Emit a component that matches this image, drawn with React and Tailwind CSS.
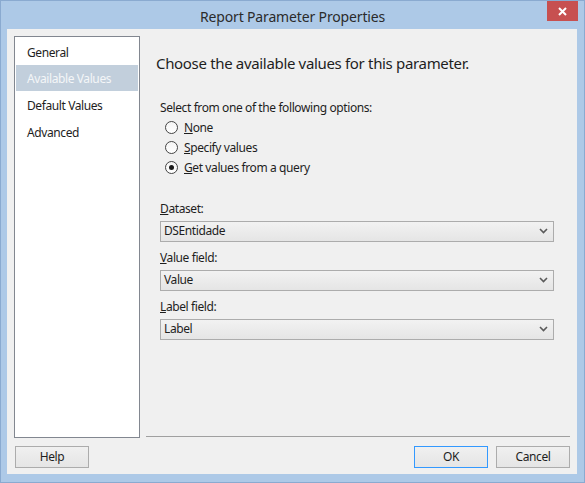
import React from 'react'

const font = { fontFamily: '"Noto Sans", "Open Sans", sans-serif' }

const Radio = ({ checked, children }) => (
  <div className="flex items-center h-[20px]">
    <span className="w-[13px] h-[13px] rounded-full border border-[#444] bg-gradient-to-b from-[#f4f4f4] to-[#ffffff] flex items-center justify-center">
      {checked ? <span className="w-[5px] h-[5px] rounded-full bg-[#1a1a1a]" /> : null}
    </span>
    <span className="ml-[6px] text-[12px] tracking-[-0.4px] text-[#1e1e1e]">{children}</span>
  </div>
)

const Select = ({ value }) => (
  <div className="w-[394px] h-[21px] border border-[#acacac] bg-gradient-to-b from-[#f2f2f2] to-[#e5e5e5] flex items-center justify-between pl-[3px] pr-[5px]">
    <span className="text-[12px] tracking-[-0.4px] text-[#1e1e1e]">{value}</span>
    <svg width="9" height="6" viewBox="0 0 9 6">
      <path d="M1 1 L4.5 4.5 L8 1" fill="none" stroke="#5a5a5a" strokeWidth="1.6" />
    </svg>
  </div>
)

const Btn = ({ children, primary }) => (
  <button className={`w-[74px] h-[22px] text-[12px] tracking-[-0.4px] text-[#1e1e1e] bg-gradient-to-b from-[#f0f0f0] to-[#e5e5e5] border ${primary ? 'border-[#3399ff]' : 'border-[#acacac]'}`}>
    {children}
  </button>
)

// page list on the left, heights tuned to the reference
const items = [
  { label: 'General', cls: 'h-[26px] pt-[2px]' },
  { label: 'Available Values', cls: 'h-[26px] pt-[1px] bg-[#c2cfdc] text-[#f4f6f8]' },
  { label: 'Default Values', cls: 'h-[27px] pt-[3px]' },
  { label: 'Advanced', cls: 'h-[27px] pt-[3px]' },
]

export default function App() {
  return (
    <div style={font} className="w-[585px] h-[483px] bg-[#adc9e7] border border-[#8aaad0] flex flex-col">
      <div className="h-[28px] relative flex items-center justify-center">
        <span className="text-[14px] tracking-[-0.15px] text-[#2b2b2b] mt-[2px]">Report Parameter Properties</span>
        <div className="absolute right-[6px] top-0 w-[31px] h-[20px] bg-[#c75050] flex items-center justify-center">
          <svg width="9" height="9" viewBox="0 0 9 9">
            <path d="M1 1 L8 8 M8 1 L1 8" stroke="#fff" strokeWidth="2" />
          </svg>
        </div>
      </div>
      <div className="ml-[6px] w-[570px] h-[445px] bg-[#f0f0f0] flex flex-col">
        <div className="flex pt-[7px] pl-[7px] gap-[6px]">
          <div className="w-[126px] h-[402px] bg-white border border-[#828790] pt-[2px] px-[1px] flex flex-col text-[#1e1e1e]">
            {items.map((it) => (
              <div key={it.label} className={`pl-[11px] flex items-center text-[12px] tracking-[-0.4px] ${it.cls}`}>
                {it.label}
              </div>
            ))}
          </div>
          <div className="w-[424px] h-[401px] border-b border-[#a0a0a0]">
            <div className="pl-[10px] pt-[16px] text-[15px] tracking-[-0.33px] text-[#1e1e1e]">Choose the available values for this parameter.</div>
            <div className="pl-[14px] mt-[24px] text-[12px] tracking-[-0.4px] text-[#1e1e1e]">Select from one of the following options:</div>
            <div className="pl-[19px] mt-[1px] flex flex-col">
              <Radio><span className="underline">N</span>one</Radio>
              <Radio><span className="underline">S</span>pecify values</Radio>
              <Radio checked><span className="underline">G</span>et values from a query</Radio>
            </div>
            <div className="pl-[14px] mt-[22px] flex flex-col text-[12px] tracking-[-0.4px] text-[#1e1e1e]">
              <div className="h-[16px]"><span className="underline">D</span>ataset:</div>
              <div className="mt-[5px]"><Select value="DSEntidade" /></div>
              <div className="h-[16px] mt-[7px]"><span className="underline">V</span>alue field:</div>
              <div className="mt-[5px]"><Select value="Value" /></div>
              <div className="h-[16px] mt-[7px]"><span className="underline">L</span>abel field:</div>
              <div className="mt-[5px]"><Select value="Label" /></div>
            </div>
          </div>
        </div>
        <div className="flex mt-[8px] pl-[8px] pr-[7px]">
          <Btn>Help</Btn>
          <div className="flex-1" />
          <Btn primary>OK</Btn>
          <div className="w-[8px]" />
          <Btn>Cancel</Btn>
        </div>
      </div>
    </div>
  )
}
